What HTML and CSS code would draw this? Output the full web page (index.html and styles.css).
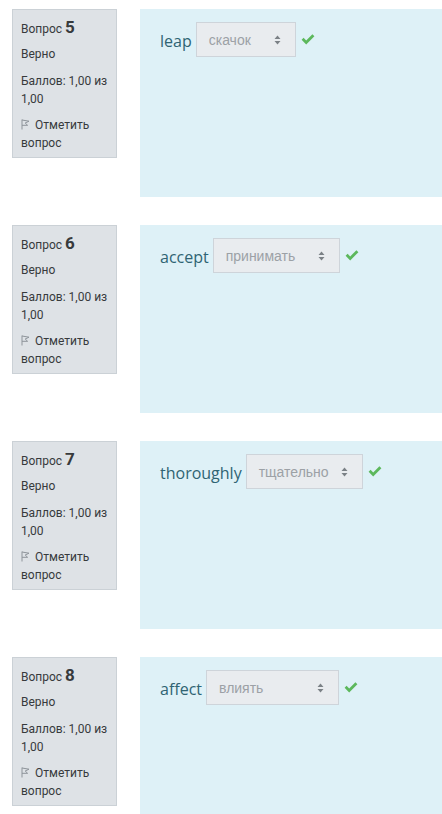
FILE: index.html
```html
<!DOCTYPE html>
<html lang="ru">
<head>
<meta charset="utf-8">
<title>Тест</title>
<link rel="stylesheet" href="styles.css">
</head>
<body>
<svg width="0" height="0" class="defs">
  <defs>
    <symbol id="flag" viewBox="0 0 9 11">
      <path d="M1 0.5 V10.5 M1 1 L8 2.2 L4.2 4 L6.6 6.3 L1 6.3" fill="none" stroke="#8e949a" stroke-width="1" stroke-linejoin="miter"/>
    </symbol>
    <symbol id="sort" viewBox="0 0 7 10">
      <path d="M0.5 4 L3.5 0.5 L6.5 4 Z M0.5 6 L3.5 9.5 L6.5 6 Z" fill="#7b8186"/>
    </symbol>
    <symbol id="check" viewBox="0 0 14 11">
      <path d="M0.6 5.8 L2.6 3.8 L5.2 6.4 L11.4 0.2 L13.4 2.2 L5.2 10.4 Z" fill="#5cb85c"/>
    </symbol>
  </defs>
</svg>

<div class="que">
  <div class="info">
    <h3 class="no">Вопрос <span class="qno">5</span></h3>
    <div class="state">Верно</div>
    <div class="grade">Баллов: 1,00 из 1,00</div>
    <div class="flag"><svg class="flag-icon"><use href="#flag"/></svg> Отметить вопрос</div>
  </div>
  <div class="content">
    <div class="answer">
      <span class="word">leap</span>
      <span class="select" style="width:100px"><span>скачок</span><svg class="sort"><use href="#sort"/></svg></span>
      <svg class="check"><use href="#check"/></svg>
    </div>
  </div>
</div>

<div class="que">
  <div class="info">
    <h3 class="no">Вопрос <span class="qno">6</span></h3>
    <div class="state">Верно</div>
    <div class="grade">Баллов: 1,00 из 1,00</div>
    <div class="flag"><svg class="flag-icon"><use href="#flag"/></svg> Отметить вопрос</div>
  </div>
  <div class="content">
    <div class="answer">
      <span class="word">accept</span>
      <span class="select" style="width:127px"><span>принимать</span><svg class="sort"><use href="#sort"/></svg></span>
      <svg class="check"><use href="#check"/></svg>
    </div>
  </div>
</div>

<div class="que">
  <div class="info">
    <h3 class="no">Вопрос <span class="qno">7</span></h3>
    <div class="state">Верно</div>
    <div class="grade">Баллов: 1,00 из 1,00</div>
    <div class="flag"><svg class="flag-icon"><use href="#flag"/></svg> Отметить вопрос</div>
  </div>
  <div class="content">
    <div class="answer">
      <span class="word">thoroughly</span>
      <span class="select" style="width:117px"><span>тщательно</span><svg class="sort"><use href="#sort"/></svg></span>
      <svg class="check"><use href="#check"/></svg>
    </div>
  </div>
</div>

<div class="que">
  <div class="info">
    <h3 class="no">Вопрос <span class="qno">8</span></h3>
    <div class="state">Верно</div>
    <div class="grade">Баллов: 1,00 из 1,00</div>
    <div class="flag"><svg class="flag-icon"><use href="#flag"/></svg> Отметить вопрос</div>
  </div>
  <div class="content">
    <div class="answer">
      <span class="word">affect</span>
      <span class="select" style="width:133px"><span>влиять</span><svg class="sort"><use href="#sort"/></svg></span>
      <svg class="check"><use href="#check"/></svg>
    </div>
  </div>
</div>
</body>
</html>
```

FILE: styles.css
```css
html, body {
  margin: 0;
  padding: 0;
  background: #ffffff;
}
body {
  padding-top: 9px;
  font-family: Roboto, "Liberation Sans", Arial, sans-serif;
  color: #373a3c;
}
.defs {
  position: absolute;
  width: 0;
  height: 0;
  overflow: hidden;
}
.que {
  display: flex;
  align-items: flex-start;
  margin-bottom: 28px;
}
.info {
  box-sizing: border-box;
  width: 105px;
  height: 149px;
  margin-left: 12px;
  flex: none;
  background: #dee2e6;
  border: 1px solid #cbd1d6;
  padding: 6px 7px 0 8px;
  font-size: 12px;
  line-height: 18px;
}
.no {
  margin: 0;
  font-weight: normal;
  font-size: 12px;
  line-height: 22px;
}
.qno {
  font-size: 17px;
  font-weight: bold;
}
.state {
  margin-top: 5px;
}
.grade {
  margin-top: 9px;
}
.flag {
  margin-top: 8px;
}
.flag-icon {
  width: 9px;
  height: 11px;
  vertical-align: -1px;
  margin-right: 2px;
}
.content {
  box-sizing: border-box;
  flex: 1;
  height: 188px;
  margin-left: 23px;
  background: #def1f7;
  padding: 13px 20px;
}
.answer {
  display: flex;
  align-items: center;
}
.word {
  font-family: "Open Sans", sans-serif;
  font-size: 16px;
  line-height: 22px;
  color: #2f6473;
  margin-right: 4px;
  padding-top: 2px;
}
.select {
  box-sizing: border-box;
  display: inline-flex;
  align-items: center;
  justify-content: space-between;
  height: 35px;
  padding: 0 14px 0 12px;
  background: #e9ecef;
  border: 1px solid #ced4da;
  font-family: "Liberation Sans", Arial, sans-serif;
  font-size: 14px;
  color: #9ca1a6;
}
.sort {
  width: 7px;
  height: 10px;
}
.check {
  width: 14px;
  height: 11px;
  margin-left: 5px;
}
```
